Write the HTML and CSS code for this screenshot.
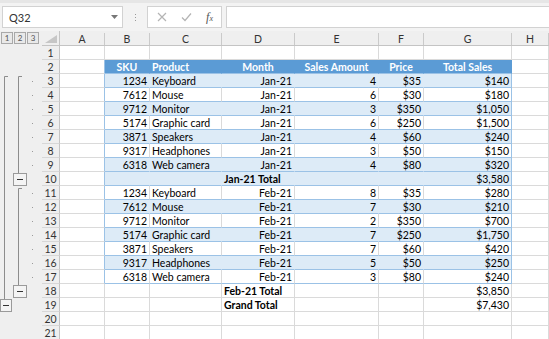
FILE: index.html
```html
<!DOCTYPE html>
<html lang="en">
<head>
  <meta charset="UTF-8" />
  <title>Outline - Sales</title>
  <link rel="stylesheet" href="styles.css">
</head>
<body>
  <div class="toolbar">
    <div class="namebox">
      <span>Q32</span>
      <svg width="7" height="4" viewBox="0 0 7 4"><path d="M0 0h7L3.5 4z" fill="#777"/></svg>
    </div>
    <div class="grip"><i></i><i></i><i></i></div>
    <div class="fxbox">
      <svg width="10" height="10" viewBox="0 0 10 10"><path d="M1 1l8 8M9 1l-8 8" stroke="#b4b4b4" stroke-width="1.2"/></svg>
      <svg width="11" height="10" viewBox="0 0 11 10"><path d="M1 5.5l3 3 6-7" stroke="#b4b4b4" stroke-width="1.2" fill="none"/></svg>
      <span class="fx"><i>f</i><small>x</small></span>
    </div>
    <div class="formula"></div>
  </div>

  <div class="sheet">
    <div class="outline">
      <div class="levels">
        <span>1</span><span>2</span><span>3</span>
      </div>
      <svg class="groups" width="42" height="294" viewBox="0 0 42 294">
        <g stroke="#8c8c8c" fill="none">
          <path d="M8 30.5H4.5V253"/>
          <path d="M22 30.5H18.5V127"/>
          <path d="M22 142.5H18.5V239"/>
        </g>
        <g fill="#f4f4f4" stroke="#9a9a9a">
          <rect x="0.5" y="253.5" width="11" height="12"/>
          <rect x="13.5" y="127.5" width="13" height="12"/>
          <rect x="13.5" y="239.5" width="13" height="12"/>
        </g>
        <g stroke="#333">
          <path d="M3 259.5h6"/>
          <path d="M17 133.5h6"/>
          <path d="M17 245.5h6"/>
        </g>
        <g fill="#9a9a9a">
          <rect x="32" y="35" width="1" height="1"/><rect x="32" y="49" width="1" height="1"/>
          <rect x="32" y="63" width="1" height="1"/><rect x="32" y="77" width="1" height="1"/>
          <rect x="32" y="91" width="1" height="1"/><rect x="32" y="105" width="1" height="1"/>
          <rect x="32" y="119" width="1" height="1"/>
          <rect x="32" y="147" width="1" height="1"/><rect x="32" y="161" width="1" height="1"/>
          <rect x="32" y="175" width="1" height="1"/><rect x="32" y="189" width="1" height="1"/>
          <rect x="32" y="203" width="1" height="1"/><rect x="32" y="217" width="1" height="1"/>
          <rect x="32" y="231" width="1" height="1"/>
        </g>
      </svg>
    </div>

    <div class="grid">
      <div class="row colhead">
        <div class="corner"><svg width="12" height="8" viewBox="0 0 12 8"><path d="M12 0V8H0z" fill="#c6c6c6"/></svg></div>
        <div class="ch">A</div><div class="ch">B</div><div class="ch">C</div><div class="ch">D</div>
        <div class="ch">E</div><div class="ch">F</div><div class="ch">G</div><div class="ch">H</div>
      </div>

      <div class="row">
        <div class="rh">1</div><div class="c"></div><div class="c"></div><div class="c"></div><div class="c"></div>
        <div class="c"></div><div class="c"></div><div class="c"></div><div class="c"></div>
      </div>
      <div class="row t-head">
        <div class="rh">2</div><div class="c a"></div>
        <div class="c tb">SKU</div><div class="c tb l">Product</div><div class="c tb">Month</div>
        <div class="c tb">Sales Amount</div><div class="c tb">Price</div><div class="c tb last">Total Sales</div><div class="c"></div>
      </div>
      <div class="row t-band">
        <div class="rh">3</div><div class="c a"></div>
        <div class="c tb r">1234</div><div class="c tb">Keyboard</div><div class="c tb r">Jan-21</div>
        <div class="c tb r">4</div><div class="c tb r">$35</div><div class="c tb r last">$140</div><div class="c"></div>
      </div>
      <div class="row t-plain">
        <div class="rh">4</div><div class="c a"></div>
        <div class="c tb r">7612</div><div class="c tb">Mouse</div><div class="c tb r">Jan-21</div>
        <div class="c tb r">6</div><div class="c tb r">$30</div><div class="c tb r last">$180</div><div class="c"></div>
      </div>
      <div class="row t-band">
        <div class="rh">5</div><div class="c a"></div>
        <div class="c tb r">9712</div><div class="c tb">Monitor</div><div class="c tb r">Jan-21</div>
        <div class="c tb r">3</div><div class="c tb r">$350</div><div class="c tb r last">$1,050</div><div class="c"></div>
      </div>
      <div class="row t-plain">
        <div class="rh">6</div><div class="c a"></div>
        <div class="c tb r">5174</div><div class="c tb">Graphic card</div><div class="c tb r">Jan-21</div>
        <div class="c tb r">6</div><div class="c tb r">$250</div><div class="c tb r last">$1,500</div><div class="c"></div>
      </div>
      <div class="row t-band">
        <div class="rh">7</div><div class="c a"></div>
        <div class="c tb r">3871</div><div class="c tb">Speakers</div><div class="c tb r">Jan-21</div>
        <div class="c tb r">4</div><div class="c tb r">$60</div><div class="c tb r last">$240</div><div class="c"></div>
      </div>
      <div class="row t-plain">
        <div class="rh">8</div><div class="c a"></div>
        <div class="c tb r">9317</div><div class="c tb">Headphones</div><div class="c tb r">Jan-21</div>
        <div class="c tb r">3</div><div class="c tb r">$50</div><div class="c tb r last">$150</div><div class="c"></div>
      </div>
      <div class="row t-band">
        <div class="rh">9</div><div class="c a"></div>
        <div class="c tb r">6318</div><div class="c tb">Web camera</div><div class="c tb r">Jan-21</div>
        <div class="c tb r">4</div><div class="c tb r">$80</div><div class="c tb r last">$320</div><div class="c"></div>
      </div>
      <div class="row t-band">
        <div class="rh">10</div><div class="c a"></div>
        <div class="c tb"></div><div class="c tb"></div><div class="c tb b">Jan-21 Total</div>
        <div class="c tb"></div><div class="c tb"></div><div class="c tb r last">$3,580</div><div class="c"></div>
      </div>
      <div class="row t-plain">
        <div class="rh">11</div><div class="c a"></div>
        <div class="c tb r">1234</div><div class="c tb">Keyboard</div><div class="c tb r">Feb-21</div>
        <div class="c tb r">8</div><div class="c tb r">$35</div><div class="c tb r last">$280</div><div class="c"></div>
      </div>
      <div class="row t-band">
        <div class="rh">12</div><div class="c a"></div>
        <div class="c tb r">7612</div><div class="c tb">Mouse</div><div class="c tb r">Feb-21</div>
        <div class="c tb r">7</div><div class="c tb r">$30</div><div class="c tb r last">$210</div><div class="c"></div>
      </div>
      <div class="row t-plain">
        <div class="rh">13</div><div class="c a"></div>
        <div class="c tb r">9712</div><div class="c tb">Monitor</div><div class="c tb r">Feb-21</div>
        <div class="c tb r">2</div><div class="c tb r">$350</div><div class="c tb r last">$700</div><div class="c"></div>
      </div>
      <div class="row t-band">
        <div class="rh">14</div><div class="c a"></div>
        <div class="c tb r">5174</div><div class="c tb">Graphic card</div><div class="c tb r">Feb-21</div>
        <div class="c tb r">7</div><div class="c tb r">$250</div><div class="c tb r last">$1,750</div><div class="c"></div>
      </div>
      <div class="row t-plain">
        <div class="rh">15</div><div class="c a"></div>
        <div class="c tb r">3871</div><div class="c tb">Speakers</div><div class="c tb r">Feb-21</div>
        <div class="c tb r">7</div><div class="c tb r">$60</div><div class="c tb r last">$420</div><div class="c"></div>
      </div>
      <div class="row t-band">
        <div class="rh">16</div><div class="c a"></div>
        <div class="c tb r">9317</div><div class="c tb">Headphones</div><div class="c tb r">Feb-21</div>
        <div class="c tb r">5</div><div class="c tb r">$50</div><div class="c tb r last">$250</div><div class="c"></div>
      </div>
      <div class="row t-plain">
        <div class="rh">17</div><div class="c a"></div>
        <div class="c tb r">6318</div><div class="c tb">Web camera</div><div class="c tb r">Feb-21</div>
        <div class="c tb r">3</div><div class="c tb r">$80</div><div class="c tb r last">$240</div><div class="c"></div>
      </div>
      <div class="row">
        <div class="rh">18</div><div class="c"></div><div class="c"></div><div class="c"></div><div class="c b">Feb-21 Total</div>
        <div class="c"></div><div class="c"></div><div class="c r">$3,850</div><div class="c"></div>
      </div>
      <div class="row">
        <div class="rh">19</div><div class="c"></div><div class="c"></div><div class="c"></div><div class="c b">Grand Total</div>
        <div class="c"></div><div class="c"></div><div class="c r">$7,430</div><div class="c"></div>
      </div>
      <div class="row">
        <div class="rh">20</div><div class="c"></div><div class="c"></div><div class="c"></div><div class="c"></div>
        <div class="c"></div><div class="c"></div><div class="c"></div><div class="c"></div>
      </div>
      <div class="row">
        <div class="rh">21</div><div class="c"></div><div class="c"></div><div class="c"></div><div class="c"></div>
        <div class="c"></div><div class="c"></div><div class="c"></div><div class="c"></div>
      </div>
    </div>
  </div>
</body>
</html>
```

FILE: styles.css
```css
* {
  box-sizing: border-box;
}

body {
  margin: 0;
  width: 549px;
  height: 339px;
  overflow: hidden;
  font-family: Lato, "Liberation Sans", sans-serif;
  font-size: 10.5px;
  color: #000;
  background: #fff;
}

/* formula bar */
.toolbar {
  height: 31px;
  display: flex;
  align-items: center;
  padding: 0 0 0 2px;
  background: #f3f3f3;
  border-top: 3px solid #e6e6e6;
}

.namebox, .fxbox, .formula {
  height: 22px;
  background: #fff;
  border: 1px solid #d2d2d2;
}

.namebox {
  width: 121px;
  display: flex;
  align-items: center;
  justify-content: space-between;
  padding: 0 4px 0 6px;
  font-size: 11px;
  color: #333;
}

.grip {
  width: 24px;
  display: flex;
  flex-direction: column;
  align-items: center;
  gap: 2px;
}

.grip i {
  width: 1px;
  height: 1px;
  background: #999;
}

.fxbox {
  width: 75px;
  display: flex;
  align-items: center;
  justify-content: space-between;
  padding: 0 8px 0 9px;
}

.fx {
  font-family: "Liberation Serif", serif;
  color: #555;
  font-size: 12px;
}

.fx small {
  font-size: 8px;
  font-style: italic;
}

.formula {
  flex: 1;
  margin-left: 4px;
  border-right: none;
}

/* sheet */
.sheet {
  display: flex;
}

.outline {
  width: 42px;
  background: #efefef;
}

.levels {
  height: 15px;
  display: flex;
  gap: 1px;
  padding: 1px 0 0 1px;
}

.levels span {
  width: 12px;
  height: 12px;
  border: 1px solid #a9a9a9;
  background: #e9e9e9;
  color: #555;
  font-size: 8px;
  line-height: 10px;
  text-align: center;
}

.groups {
  display: block;
}

.grid {
  flex: 1;
}

.row {
  display: grid;
  grid-template-columns: 18px 45px 45px 72px 73px 84px 45px 88px 1fr;
  height: 14px;
}

.colhead {
  height: 15px;
  background: #efefef;
  border-bottom: 1px solid #c4c4c4;
}

.corner {
  display: flex;
  align-items: flex-end;
  justify-content: flex-end;
  padding: 0 2px 2px 0;
  border-right: 1px solid #c4c4c4;
}

.ch {
  text-align: center;
  color: #333;
  border-right: 1px solid #cacaca;
  margin-top: 2px;
  line-height: 12px;
}

.rh {
  background: #efefef;
  color: #333;
  text-align: center;
  padding-top: 1px;
  line-height: 12px;
  border-bottom: 1px solid #d7d7d7;
  border-right: 1px solid #c4c4c4;
}

.c {
  padding: 1px 2px 0;
  line-height: 12px;
  white-space: nowrap;
  overflow: hidden;
  border-right: 1px solid #dadada;
  border-bottom: 1px solid #dadada;
}

.r { text-align: right; }
.l { text-align: left !important; }
.b { font-weight: bold; }

/* table style: blue banded rows */
.t-head .a, .t-band .a, .t-plain .a {
  border-right-color: #9bc2e6;
}

.t-head .tb {
  background: #5b9bd5;
  color: #fff;
  font-weight: bold;
  text-align: center;
  border-right-color: #5b9bd5;
  border-bottom-color: #9bc2e6;
}

.t-band .tb {
  background: #ddebf7;
  border-right-color: #ddebf7;
  border-bottom-color: #9bc2e6;
}

.t-plain .tb {
  border-bottom-color: #9bc2e6;
}

.t-band .last, .t-plain .last {
  border-right-color: #9bc2e6;
}
```
